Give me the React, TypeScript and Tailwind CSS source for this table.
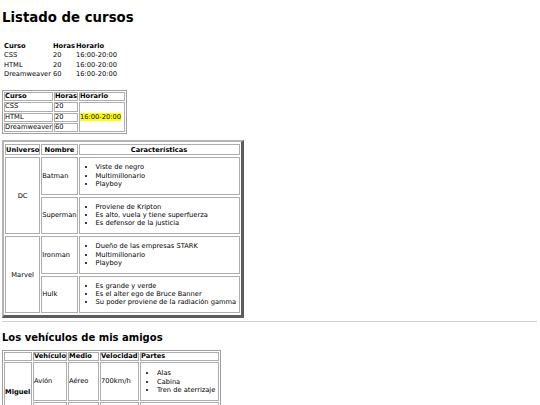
import React from "react";

const c2 = "border border-[#adadad] p-0 align-middle text-left whitespace-nowrap leading-[7.2px]";
const c3 = "border border-[#adadad] p-0 align-middle whitespace-nowrap leading-[8px]";

function List({ items, m }: { items: string[]; m: string }) {
  return (
    <ul className={`list-disc pl-[16px] text-left ${m}`}>
      {items.map((t) => (
        <li key={t} className="leading-[8.3px]">
          {t}
        </li>
      ))}
    </ul>
  );
}

export default function App() {
  return (
    <div className="w-[540px] h-[405px] overflow-hidden bg-white text-black font-['DejaVu_Sans',Verdana,sans-serif] text-[6.7px] leading-[8.3px] pl-[2px] pr-[3px] pt-[9.5px]">
      <h1 className="text-[13.3px] leading-[16px] font-bold">Listado de cursos</h1>

      {/* Tabla sin bordes */}
      <table className="ml-[1px] mt-[16px] border-separate border-spacing-0">
        <thead>
          <tr>
            <th className="h-[9.33px] w-[49px] p-0 pl-[1px] text-left font-bold align-middle leading-[8px]">Curso</th>
            <th className="h-[9.33px] w-[23px] p-0 pl-[1px] text-left font-bold align-middle leading-[8px]">Horas</th>
            <th className="h-[9.33px] p-0 pl-[1px] text-left font-bold align-middle leading-[8px]">Horario</th>
          </tr>
        </thead>
        <tbody>
          {[
            ["CSS", "20", "16:00-20:00"],
            ["HTML", "20", "16:00-20:00"],
            ["Dreamweaver", "60", "16:00-20:00"],
          ].map((r) => (
            <tr key={r[0]}>
              {r.map((v, i) => (
                <td key={i} className="h-[9.33px] p-0 pl-[1px] whitespace-nowrap align-middle leading-[8px]">
                  {v}
                </td>
              ))}
            </tr>
          ))}
        </tbody>
      </table>

      {/* Tabla con borde */}
      <table className="mt-[11.2px] border-separate border-spacing-[1px] border border-[#a0a0a0]">
        <tbody>
          <tr>
            <th className={`${c2} h-[9.25px] w-[49px] font-bold`}>Curso</th>
            <th className={`${c2} h-[9.25px] w-[23px] font-bold`}>Horas</th>
            <th className={`${c2} h-[9.25px] w-[46px] font-bold`}>Horario</th>
          </tr>
          <tr>
            <td className={`${c2} h-[9.25px]`}>CSS</td>
            <td className={`${c2} h-[9.25px]`}>20</td>
            <td rowSpan={3} className={`${c2}`}>
              <mark className="bg-[#ffff00] text-black">16:00-20:00</mark>
            </td>
          </tr>
          <tr>
            <td className={`${c2} h-[9.25px]`}>HTML</td>
            <td className={`${c2} h-[9.25px]`}>20</td>
          </tr>
          <tr>
            <td className={`${c2} h-[9.25px]`}>Dreamweaver</td>
            <td className={`${c2} h-[9.25px]`}>60</td>
          </tr>
        </tbody>
      </table>

      {/* Universos */}
      <table className="mt-[6px] border-separate border-spacing-x-[1.5px] border-spacing-y-[2px] border-t-[2px] border-l-[2px] border-r-[3px] border-b-[3px] border-t-[#b4b4b4] border-l-[#b4b4b4] border-r-[#5c5c5c] border-b-[#5c5c5c]">
        <tbody>
          <tr>
            <th className={`${c3} h-[11px] w-[35px] text-center font-bold`}>Universo</th>
            <th className={`${c3} h-[11px] w-[36px] text-center font-bold`}>Nombre</th>
            <th className={`${c3} h-[11px] w-[161px] text-center font-bold`}>Características</th>
          </tr>
          <tr>
            <td rowSpan={2} className={`${c3} text-center`}>DC</td>
            <td className={`${c3} h-[37.5px] text-left`}>Batman</td>
            <td className={`${c3} h-[37.5px]`}>
              <List m="my-[5.2px]" items={["Viste de negro", "Multimillonario", "Playboy"]} />
            </td>
          </tr>
          <tr>
            <td className={`${c3} h-[37.5px] text-left`}>Superman</td>
            <td className={`${c3} h-[37.5px]`}>
              <List
                m="my-[5.2px]"
                items={[
                  "Proviene de Kripton",
                  "Es alto, vuela y tiene superfuerza",
                  "Es defensor de la justicia",
                ]}
              />
            </td>
          </tr>
          <tr>
            <td rowSpan={2} className={`${c3} text-center`}>Marvel</td>
            <td className={`${c3} h-[37.5px] text-left`}>Ironman</td>
            <td className={`${c3} h-[37.5px]`}>
              <List m="my-[5.2px]" items={["Dueño de las empresas STARK", "Multimillonario", "Playboy"]} />
            </td>
          </tr>
          <tr>
            <td className={`${c3} h-[37.5px] text-left`}>Hulk</td>
            <td className={`${c3} h-[37.5px]`}>
              <List
                m="my-[5.2px]"
                items={[
                  "Es grande y verde",
                  "Es el alter ego de Bruce Banner",
                  "Su poder proviene de la radiación gamma",
                ]}
              />
            </td>
          </tr>
        </tbody>
      </table>

      <hr className="mt-[3px] border-0 h-px bg-[#cfcfcf]" />

      <h2 className="mt-[9.8px] text-[10px] leading-[12px] font-bold">Los vehículos de mis amigos</h2>

      <table className="mt-[6.2px] border-separate border-spacing-x-[1px] border-spacing-y-[1.5px] border border-[#a0a0a0]">
        <tbody>
          <tr>
            <th className={`${c2} h-[9px] w-[28px] font-bold`}></th>
            <th className={`${c2} h-[9px] w-[34px] font-bold`}>Vehículo</th>
            <th className={`${c2} h-[9px] w-[31px] font-bold`}>Medio</th>
            <th className={`${c2} h-[9px] w-[39px] font-bold`}>Velocidad</th>
            <th className={`${c2} h-[9px] w-[79px] font-bold`}>Partes</th>
          </tr>
          <tr>
            <th rowSpan={2} className={`${c2} font-bold`}>Miguel</th>
            <td className={`${c2} h-[39px]`}>Avión</td>
            <td className={`${c2} h-[39px]`}>Aéreo</td>
            <td className={`${c2} h-[39px]`}>700km/h</td>
            <td className={`${c2} h-[39px]`}>
              <List m="my-[5.8px]" items={["Alas", "Cabina", "Tren de aterrizaje"]} />
            </td>
          </tr>
          <tr>
            <td className={`${c2} h-[20px]`}></td>
            <td className={`${c2} h-[20px]`}></td>
            <td className={`${c2} h-[20px]`}></td>
            <td className={`${c2} h-[20px]`}></td>
          </tr>
        </tbody>
      </table>
    </div>
  );
}
